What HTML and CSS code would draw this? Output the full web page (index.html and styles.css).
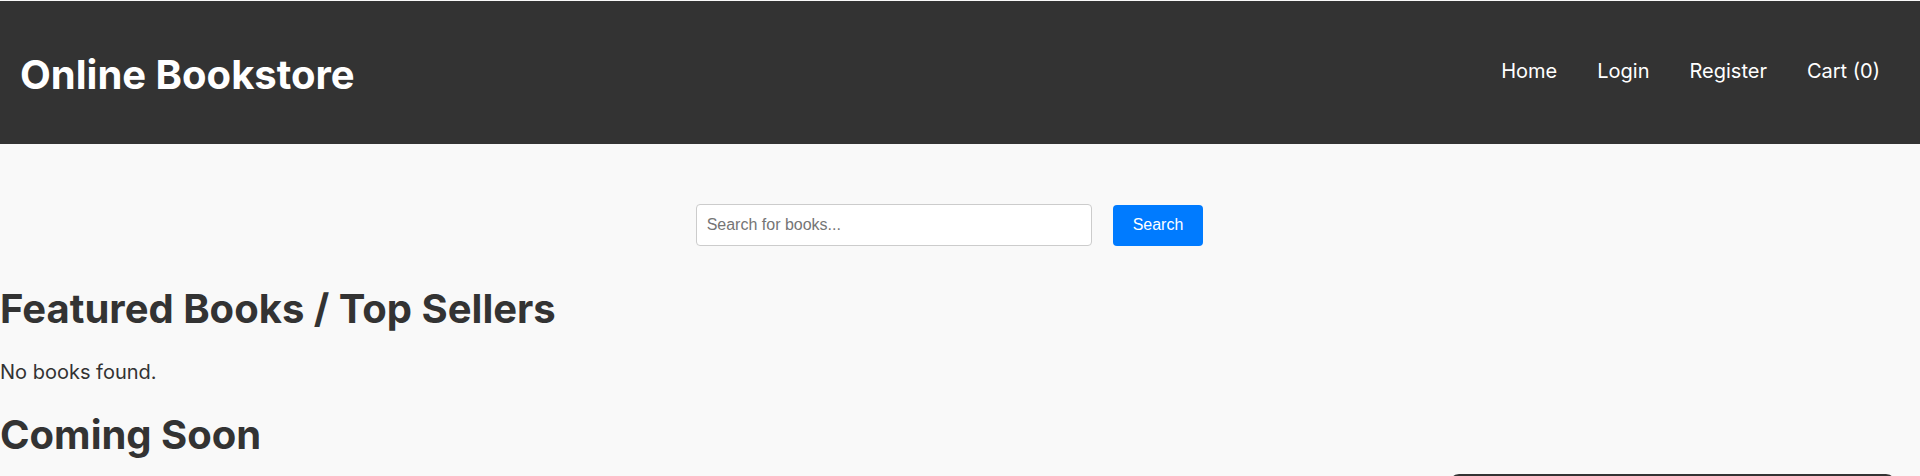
FILE: index.html
```html
<!DOCTYPE html>
<html lang="en">
<head>
<meta charset="utf-8">
<title>Online Bookstore</title>
<link rel="stylesheet" href="styles.css">
</head>
<body>
<header class="site-header">
  <h1 class="brand">Online Bookstore</h1>
  <nav class="nav">
    <a href="#" class="nav-link">Home</a>
    <a href="#" class="nav-link">Login</a>
    <a href="#" class="nav-link">Register</a>
    <a href="#" class="nav-link">Cart (0)</a>
  </nav>
</header>
<main class="main">
  <form class="search">
    <input class="search-input" type="text" placeholder="Search for books...">
    <button class="search-btn" type="button">Search</button>
  </form>
  <h2 class="section-title">Featured Books / Top Sellers</h2>
  <p class="empty">No books found.</p>
  <h2 class="section-title">Coming Soon</h2>
</main>
<div class="chat-widget"></div>
</body>
</html>
```
FILE: styles.css
```css
* { box-sizing: border-box; }
html, body { margin: 0; padding: 0; }
body {
  background: #f9f9f9;
  color: #333333;
  font-family: Inter, "Noto Sans", sans-serif;
  padding-top: 1px;
  overflow: hidden;
}
.site-header {
  background: #333333;
  height: 143px;
  display: flex;
  align-items: center;
  justify-content: space-between;
  padding: 0 40px 0 20px;
}
.brand {
  margin: 0;
  color: #ffffff;
  font-size: 40px;
  font-weight: 700;
  line-height: 1;
  padding-top: 4px;
}
.nav {
  display: flex;
  gap: 40px;
  margin-top: -3px;
}
.nav-link {
  color: #ffffff;
  text-decoration: none;
  font-size: 20px;
}
.search {
  display: flex;
  justify-content: center;
  align-items: center;
  gap: 21px;
  margin: 60px 0 0;
  padding-right: 21px;
}
.search-input {
  width: 396px;
  height: 42px;
  border: 1px solid #cccccc;
  border-radius: 4px;
  padding: 0 10px;
  font-family: "Liberation Sans", Arial, sans-serif;
  font-size: 16px;
  background: #ffffff;
  color: #333;
}
.search-input::placeholder { color: #757575; }
.search-btn {
  height: 41px;
  padding: 0 20px;
  border: none;
  border-radius: 4px;
  background: #007bff;
  color: #ffffff;
  font-family: "Liberation Sans", Arial, sans-serif;
  font-size: 16px;
}
.section-title {
  font-size: 40px;
  font-weight: 700;
  margin: 38px 0 0;
}
.empty {
  font-size: 20px;
  margin: 27px 0 0;
}
.empty + .section-title {
  margin-top: 26px;
}
.chat-widget {
  position: fixed;
  right: 24px;
  top: 474px;
  width: 447px;
  height: 300px;
  background: #333333;
  border-radius: 10px 10px 0 0;
}
```
